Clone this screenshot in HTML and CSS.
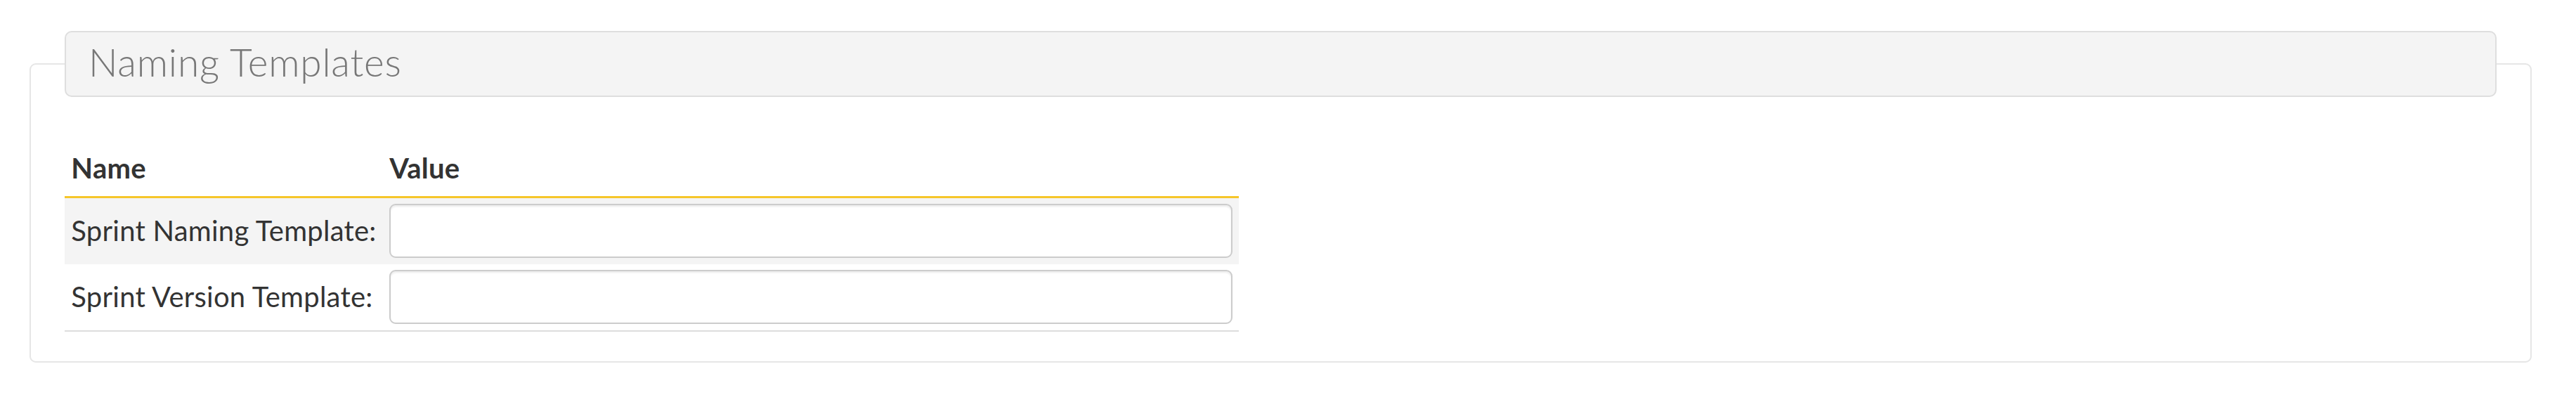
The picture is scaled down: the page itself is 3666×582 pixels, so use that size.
FILE: index.html
```html
<!DOCTYPE html>
<html lang="en">
<head>
<meta charset="utf-8">
<title>Naming Templates</title>
<link rel="stylesheet" href="styles.css">
</head>
<body>
<fieldset class="panel">
  <legend class="panel-title">Naming Templates</legend>
  <table class="settings">
    <thead>
      <tr>
        <th class="col-name">Name</th>
        <th class="col-value">Value</th>
      </tr>
    </thead>
    <tbody>
      <tr class="row-odd">
        <td class="col-name">Sprint Naming Template:</td>
        <td class="col-value"><input class="text-input" type="text"></td>
      </tr>
      <tr class="row-even">
        <td class="col-name">Sprint Version Template:</td>
        <td class="col-value"><input class="text-input" type="text"></td>
      </tr>
    </tbody>
  </table>
</fieldset>
</body>
</html>
```

FILE: styles.css
```css
html, body {
  margin: 0;
  padding: 0;
  background: #ffffff;
}

body {
  font-family: Lato, "Noto Sans", sans-serif;
  color: #333333;
}

.panel {
  margin: 44px 63px 0 42px;
  padding: 0 48px 42px 48px;
  border: 2.33px solid #e6e6e6;
  border-radius: 9px;
  min-width: 0;
}

.panel-title {
  display: block;
  width: 100%;
  box-sizing: border-box;
  height: 94px;
  padding: 0 0 0 32px;
  background: #f4f4f4;
  border: 2.33px solid #dedede;
  border-radius: 10px;
  font-size: 55px;
  font-weight: 300;
  letter-spacing: 0.8px;
  line-height: 85px;
  color: #777777;
}

.settings {
  width: 1671px;
  margin-top: 69px;
  border-collapse: collapse;
  border-spacing: 0;
}

.settings th {
  text-align: left;
  font-size: 40px;
  font-weight: 700;
  letter-spacing: 0.25px;
  line-height: 53.33px;
  padding: 6px 9.33px 12.67px 9.33px;
  border-bottom: 3px solid #f6c62a;
  color: #333333;
}

.settings td {
  font-size: 40px;
  letter-spacing: 0.25px;
  line-height: 53.33px;
  padding: 8.5px 9.33px;
  vertical-align: middle;
  color: #333333;
}

.settings .col-name {
  width: 1px;
  white-space: nowrap;
}

.row-odd td {
  background: #f4f4f4;
}

.row-even td {
  border-bottom: 2.33px solid #dddddd;
}

.text-input {
  display: block;
  width: 100%;
  height: 77px;
  box-sizing: border-box;
  margin: 0;
  padding: 0 14px;
  border: 2.33px solid #cccccc;
  border-radius: 9px;
  background: #ffffff;
  box-shadow: inset 0 2.33px 2.33px rgba(0, 0, 0, 0.075);
  font-family: inherit;
  font-size: 33px;
  color: #555555;
  outline: none;
}
```
